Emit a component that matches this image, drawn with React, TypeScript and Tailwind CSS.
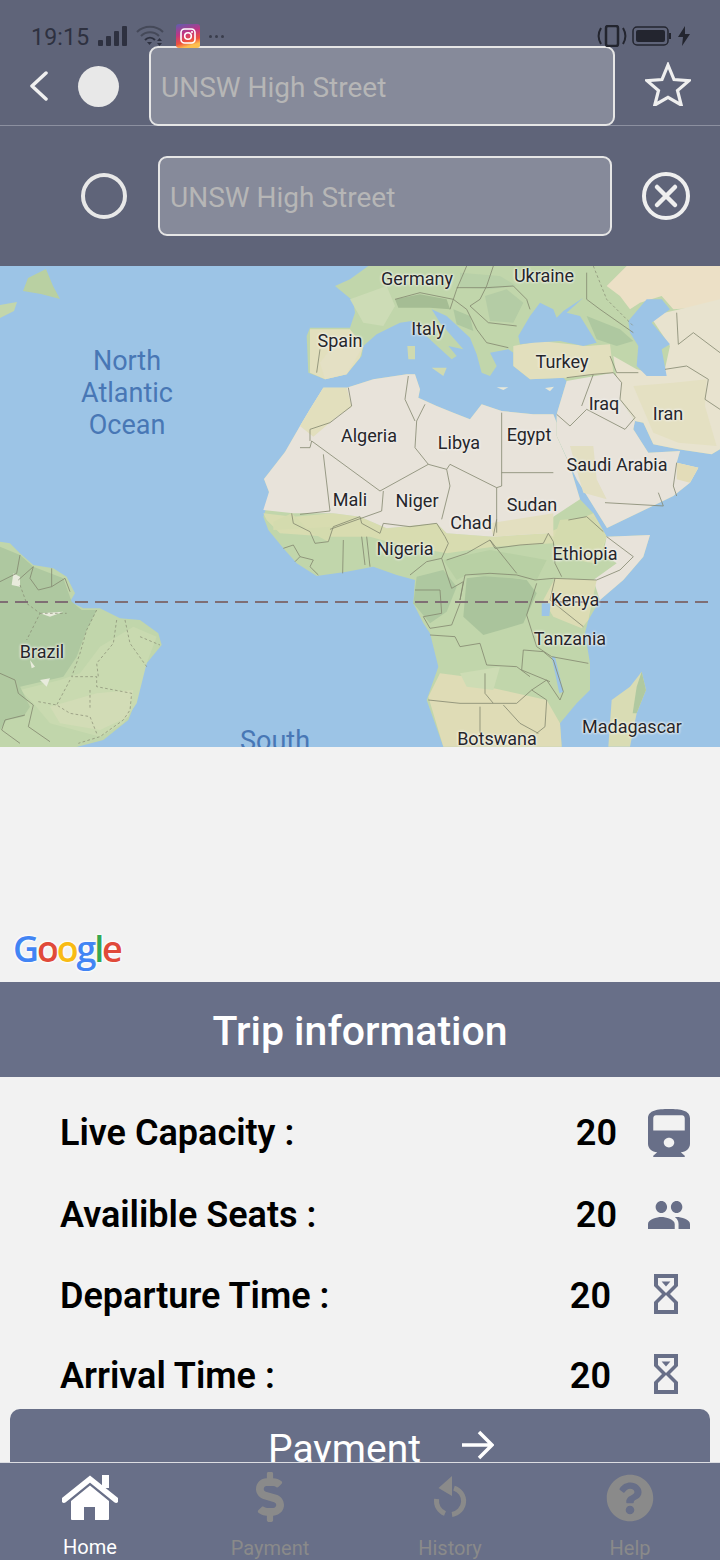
import { MdPeople } from "react-icons/md";
import { FaDollarSign, FaQuestionCircle } from "react-icons/fa";

const roboto = "font-['Roboto',sans-serif]";

// x, y = label centre in map pixels
const COUNTRIES = [
  { name: "Germany", x: 417, y: 13 },
  { name: "Ukraine", x: 544, y: 10 },
  { name: "Italy", x: 428, y: 63 },
  { name: "Spain", x: 340, y: 75 },
  { name: "Turkey", x: 562, y: 96 },
  { name: "Iraq", x: 604, y: 138 },
  { name: "Iran", x: 668, y: 148 },
  { name: "Algeria", x: 369, y: 170 },
  { name: "Libya", x: 459, y: 177 },
  { name: "Egypt", x: 529, y: 169 },
  { name: "Saudi Arabia", x: 617, y: 199 },
  { name: "Mali", x: 350, y: 234 },
  { name: "Niger", x: 417, y: 235 },
  { name: "Sudan", x: 532, y: 239 },
  { name: "Chad", x: 471, y: 257 },
  { name: "Nigeria", x: 405, y: 283 },
  { name: "Ethiopia", x: 585, y: 288 },
  { name: "Kenya", x: 575, y: 334 },
  { name: "Tanzania", x: 570, y: 373 },
  { name: "Brazil", x: 42, y: 386 },
  { name: "Madagascar", x: 632, y: 461 },
  { name: "Botswana", x: 497, y: 473 },
];

const ROWS = [
  { label: "Live Capacity :", value: "20", icon: "train", h: "h-[82px]" },
  { label: "Availible Seats :", value: "20", icon: "people", h: "h-[82px]" },
  { label: "Departure Time :", value: "20", icon: "hourglass", h: "h-[80px]" },
  { label: "Arrival Time :", value: "20", icon: "hourglass", h: "h-[80px]" },
];

function Hourglass() {
  return (
    <svg viewBox="6 2 12 20" className="w-6 h-10 -mt-1" fill="#686f88">
      <path d="M6 2v6h.01L6 8.01 10 12l-4 4 .01.01H6V22h12v-5.99h-.01L18 16l-4-4 4-3.99-.01-.01H18V2H6zm10 14.5V20H8v-3.5l4-4 4 4zm-4-5l-4-4V4h8v3.5l-4 4z" />
      <path d="M9.8 5.8h4.4L12 8.2z" />
    </svg>
  );
}

function StatusBar() {
  return (
    <div className="h-[46px] flex items-end pl-[31px] pr-[30px] text-[#2e3140] relative z-10">
      <span className={`${roboto} text-[23px] leading-[30px] translate-y-[7px] tracking-[0.2px]`}>19:15</span>
      <svg viewBox="0 0 30 20" className="w-[30px] h-5 ml-[9px]" fill="#2e3140">
        <rect x="0" y="14" width="5" height="6" rx="1" />
        <rect x="8" y="10" width="5" height="10" rx="1" />
        <rect x="16" y="5" width="5" height="15" rx="1" />
        <rect x="24" y="0" width="5" height="20" rx="1" />
      </svg>
      <svg viewBox="0 0 28 23" className="w-7 h-[23px] ml-2 translate-y-[1px]" fill="none" stroke="#454959" strokeWidth="2">
        <path d="M1 8C8 1 20 1 27 8" />
        <path d="M5 12c5-5 13-5 18 0" />
        <path d="M9 16c3-3 7-3 10 0" stroke="#2e3140" />
        <path d="M11 18h5l-2.500 3z" fill="#2e3140" stroke="none" />
        <path d="M21 17l2.500-3 2.500 3zM21 19l2.500 3 2.500-3z" fill="#2e3140" stroke="none" />
      </svg>
      <svg viewBox="0 0 24 24" className="w-6 h-6 ml-3 translate-y-[2px]">
        <defs>
          <linearGradient id="ig" x1="0" y1="0" x2="0.3" y2="1">
            <stop offset="0" stopColor="#5b5fb0" />
            <stop offset="0.45" stopColor="#c13584" />
            <stop offset="0.8" stopColor="#f0523c" />
            <stop offset="1" stopColor="#fdc04f" />
          </linearGradient>
        </defs>
        <rect width="24" height="24" rx="3" fill="url(#ig)" />
        <rect x="5" y="5" width="14" height="14" rx="3.500" fill="none" stroke="#fff" strokeWidth="1.600" />
        <circle cx="12" cy="12" r="3.300" fill="none" stroke="#fff" strokeWidth="1.600" />
        <circle cx="16" cy="8" r="1" fill="#fff" />
      </svg>
      <div className="flex gap-[3px] ml-[9px] mb-[8px]">
        <span className="w-[3px] h-[3px] rounded-full bg-[#3a3d4c]" />
        <span className="w-[3px] h-[3px] rounded-full bg-[#3a3d4c]" />
        <span className="w-[3px] h-[3px] rounded-full bg-[#3a3d4c]" />
      </div>
      <div className="ml-auto flex items-center translate-y-[1px]">
        <svg viewBox="0 0 30 22" className="w-[30px] h-[22px]" fill="none" stroke="#23252f" strokeWidth="2">
          <rect x="9" y="1" width="12" height="20" rx="2" strokeWidth="2.500" />
          <path d="M4 3C1 8 1 14 4 19M26 3c3 5 3 11 0 16" />
        </svg>
        <svg viewBox="0 0 40 20" className="w-10 h-5 ml-[5px]">
          <rect x="1" y="1" width="35" height="18" rx="4" fill="none" stroke="#23252f" strokeWidth="1.500" />
          <rect x="4" y="4" width="29" height="12" rx="2" fill="#23252f" />
          <rect x="37" y="7" width="2" height="6" fill="#23252f" />
        </svg>
        <svg viewBox="0 0 12 20" className="w-3 h-5 ml-[6px]" fill="#23252f">
          <path d="M7 0L0 11h5l-1 9 8-12H7z" />
        </svg>
      </div>
    </div>
  );
}

const WATER = "#9cc4e6";
const GREEN = "#c1d6ab";
const DARK = "#aec8a0";
const TAN = "#e2dfbd";
const SAND = "#e8e3da";
const LINE = "#83866f";

function MapArt() {
  return (
    <svg viewBox="0 0 720 481" className="absolute inset-0 w-full h-full blur-[0.5px]">
      <rect width="720" height="481" fill={WATER} />
      {/* north atlantic islands */}
      <path d="M23 25L28 12 46 3 53 20 60 33 41 28z" fill="#b9d0a2" />
      <path d="M0 39L17 36 14 45 0 52z" fill="#c3d6ab" />

      {/* eurasia, coords from a 3x crop at 300,0 */}
      <g transform="translate(300,0) scale(0.33333)">
        <path d="M205 0L150 40 105 60 160 105 165 140 150 185 30 185 20 210 25 320 75 340 140 325 185 270 190 240 230 205 300 170 335 165 395 225 455 280 470 270 445 240 490 250 420 170 395 130 440 150 510 215 530 265 545 320 570 330 590 300 570 260 625 250 640 260 640 300 690 340 790 335 800 345 770 445 770 510 830 640 921 786 1120 690 1170 650 1195 605 1130 590 1140 555 1045 560 1000 490 1005 465 1030 470 1060 535 1135 550 1235 565 1260 550 1260 0z" fill={GREEN} />
        {/* spain, turkey, steppe, middle east, arabia */}
        <path d="M30 190L150 190 190 240 180 275 140 325 75 340 30 320z" fill={TAN} />
        <path d="M120 210L190 240 140 325 75 340 60 290z" fill="#e4e0c4" />
        <path d="M640 240L720 225 860 240 930 235 940 320 800 335 690 340 640 300z" fill={TAN} />
        <path d="M920 60L980 0 1260 0 1260 130 1190 125 1120 130 1085 90 1020 110 990 130 960 90z" fill="#ece0c6" />
        <path d="M1050 150L1140 130 1260 100 1260 550 1235 565 1135 550 1060 535 1030 470 1005 465 960 400 940 270 1010 310 1090 330 1110 240z" fill="#e8e3cf" />
        <path d="M1000 360L1120 350 1220 340 1215 420 1250 540 1135 530 1060 500z" fill="#e4e0c2" />
        <path d="M800 345L940 320 965 350 960 400 1005 465 1000 490 1045 560 1140 555 1130 590 1195 605 1170 650 1120 690 921 786 830 640 770 510 770 445z" fill={SAND} />
        <path d="M810 540L880 540 890 640 920 700 850 680z" fill="#e3dfc2" />
        <path d="M1130 590L1195 605 1170 650 1130 640z" fill="#e3dcb8" />
        {/* mountains */}
        <path d="M285 100L360 85 440 100 450 130 390 125 330 125 295 125z" fill="#a5bd94" />
        <path d="M460 130L510 150 520 195 470 175z" fill={DARK} />
        <path d="M555 90L620 70 670 110 640 170 570 165z" fill="#b4cca5" />
        <path d="M480 20L600 30 650 60 570 70 480 65z" fill="#b8d0a8" />
        <path d="M860 150L960 190 1000 225 950 240 890 220z" fill="#aec8a0" />
        <path d="M150 100L260 60 285 120 250 180 190 170z" fill="#cddcb6" />
        {/* seas */}
        <path d="M655 210L690 150 720 110 760 130 770 155 790 135 850 95 800 140 840 150 890 230 850 240 780 225 700 230 660 235z" fill={WATER} />
        <path d="M985 165L1040 100 1085 100 1110 130 1055 170 1110 235 1085 250 1100 330 1040 330 1010 300 1015 240 990 200z" fill={WATER} />
        {/* mediterranean islands */}
        <path d="M322 240L345 240 345 280 325 280z" fill="#cfdab0" />
        <path d="M395 305L440 305 430 330z" fill="#d0dab0" />
        <path d="M590 364L625 364 610 372z" fill="#e8e8d8" />
        <path d="M735 366L762 362 750 376z" fill="#e8e8d8" />
        {/* borders */}
        <g fill="none" stroke={LINE} strokeWidth="2.400">
          <path d="M285 100L360 80 460 100 500 130 530 190 560 230 625 245M470 65L560 65 640 60 680 100 690 130M500 0L470 70 450 130M560 60L540 100 510 120 565 170 650 180M60 250L50 320M580 0L560 60M860 20L860 100 900 130 1000 200" />
          <path d="M800 335L880 325 940 320 965 350 960 400 1005 455 975 490 860 430 810 480 770 445M880 325L845 420M930 270L950 320 1015 320M1095 310L1160 300 1225 340 1215 400 1260 430M1130 140L1135 235 1180 200 1260 260M1130 690L1120 660 1130 590M1075 680L1090 720 915 710" />
        </g>
        <path d="M880 0L920 100 1000 180" fill="none" stroke={LINE} strokeWidth="2" strokeDasharray="8 7" />
      </g>

      {/* africa, coords from a 3x crop at 260,234 */}
      <g transform="translate(260,234) scale(0.33333)">
        <path d="M120 -222L150 -272 190 -337 260 -337 340 -362 440 -377 465 -377 480 -332 475 -307 530 -282 580 -262 630 -242 665 -287 725 -267 820 -257 880 -257 890 -232 890 -192 930 -102 960 -2 1000 40 1040 110 1170 105 1150 170 1090 240 1020 300 985 360 975 400 990 490 990 570 950 610 900 670 905 740 550 740 500 600 535 500 510 400 490 370 460 310 465 240 410 225 340 200 260 215 170 228 110 190 70 145 25 90 10 50 20 20 27 -24 12 -63 75 -144z" fill={GREEN} />
        <path d="M10 40L100 50 220 40 300 50 380 85 530 70 560 100 700 110 860 100 1000 40 1040 110 1020 170 880 130 700 140 560 160 400 130 330 110 210 110 60 100 20 60z" fill="#d8dcb0" />
        <path d="M900 60L1000 50 1040 110 1000 190 900 170 880 120z" fill="#d4dbae" />
        <path d="M120 -222L150 -272 190 -337 260 -337 340 -362 440 -377 465 -377 480 -332 475 -307 530 -282 580 -262 630 -242 665 -287 725 -267 820 -257 880 -257 890 -232 890 -192 930 -102 960 -2 880 50 860 100 700 110 560 100 530 70 380 85 300 50 220 40 100 40 10 30 27 -24 12 -63 75 -144z" fill={SAND} />
        <path d="M120 -222L150 -272 190 -337 260 -337 275 -280 230 -250 160 -190z" fill="#e2dfbd" />
        <path d="M690 70L880 40 880 110 860 100 700 110z" fill="#e3dfc0" />
        <path d="M1040 110L1170 105 1150 170 1090 240 1020 300 1000 240 1070 190 1030 160z" fill={SAND} />
        <path d="M885 235L1010 240 985 360 965 385 880 350 850 300z" fill="#dcdcb4" />
        <path d="M470 230L550 210 590 260 560 335 510 370 460 310z" fill={DARK} />
        <path d="M620 235L700 225 800 240 830 280 790 370 670 405 610 350z" fill="#aac49c" />
        <path d="M550 180L690 150 860 180 830 240 620 225 590 240z" fill="#b8d0a4" />
        <path d="M505 590L540 520 620 530 680 560 860 600 900 670 905 740 550 740z" fill="#dfdcb6" />
        <path d="M600 520L720 500 700 570 620 560z" fill="#cddcb4" />
        <path d="M875 470L885 470 910 575 898 580z" fill={WATER} />
        <path d="M845 310L872 310 868 348 845 348z" fill={WATER} />
        <path d="M40 65L95 40 150 95 205 125 220 80 40 90z" fill="#d4dbae" />
        <g fill="none" stroke={LINE} strokeWidth="2.400">
          <path d="M95 40L100 70 150 95 165 130 205 125 220 80 300 50 305 70 360 100 370 70 450 80 530 70 555 110 565 130 545 175M250 120L248 220M320 110L330 200M305 110L315 195M70 145L100 135 120 170 105 185M120 170L160 180 150 200 175 225" />
          <path d="M545 175L500 185 450 225M545 175L575 265 610 245 600 300 615 225 690 220 770 225 825 240 880 235 1010 240M560 180L620 160 690 120 770 220M690 120L705 145 780 135 850 130 865 100 880 125 885 190 905 230M830 250L800 345 830 440 875 470 985 490M885 235L870 300 970 380" />
          <path d="M510 405L585 410 600 440 660 430 680 495 770 500 810 530M790 450L785 510 870 545M790 450L850 455 880 480 910 575 900 600 860 540 815 570 860 600 855 680 830 700M505 600L600 610 700 610 770 610 815 570M675 520L675 580 700 610M660 620L660 700M730 615L780 670 835 700M465 270L540 270 545 340 490 350 510 385 575 375 600 310M1040 110L1120 170 1080 210 1010 240M925 60L980 50 1030 95" />
          {/* sahara, shifted from the upper crop */}
          <path transform="translate(120,-702)" d="M0 545L30 545 35 525 240 675 385 595 345 545 350 465 375 415M345 465L315 400 325 330M385 595L440 610 450 595 590 665 605 660 605 440M605 620L760 620M590 665L590 800M440 610L450 660 425 760M70 565L90 735 0 745M250 675L245 735 90 790M30 525L30 490 90 470 155 420 145 365M590 760L580 810" />
        </g>
        {/* madagascar */}
        <path d="M1145 515L1158 570 1130 640 1110 740 1045 740 1055 600 1110 560z" fill="#d9dcb4" />
        <path d="M1145 515L1158 570 1130 640 1118 640 1130 560z" fill="#b0c9a0" />
      </g>

      {/* south america, coords from a 3x crop at 0,264 */}
      <g transform="translate(0,264) scale(0.33333)">
        <path d="M0 35L30 40 60 70 100 105 160 115 200 140 225 190 210 215 250 235 300 235 360 265 420 270 475 310 485 345 440 400 415 450 405 520 385 570 310 630 230 651 0 651z" fill={GREEN} />
        <path d="M0 50L60 75 100 110 190 145 215 215 245 240 290 240 260 300 230 380 190 440 60 470 0 430z" fill="#aec8a0" />
        <path d="M240 430L300 350 400 290 470 320 440 400 410 520 370 580 300 620 150 580 100 520 60 480 180 450z" fill="#c9dab0" />
        <path d="M150 530L290 490 400 480 385 560 300 600 180 580z" fill="#d2dcb6" />
        <path d="M0 430L50 450 90 530 70 560 20 570 0 600z" fill="#b0c9a0" />
        <path d="M40 130L60 140 60 170 35 165zM120 450L150 445 140 470zM190 245L150 260 120 250zM90 390L105 410 95 415z" fill="#e8ebdc" />
        <g fill="none" stroke={LINE} strokeWidth="2.400">
          <path d="M0 155L50 130 60 75M55 150L100 110 90 145 115 180 155 170 155 115M155 170L195 145 210 185M0 430L45 450 55 490 100 525 85 590 150 635M15 570L75 555M15 570L5 600 60 640" />
        </g>
        <g fill="none" stroke={LINE} strokeWidth="2" strokeDasharray="8 7">
          <path d="M60 165L80 220 120 250 80 330M120 250L200 250M290 240L260 300 240 370 215 440 290 440 290 470 395 490 390 540 370 570 300 620 235 640M350 270L340 340 290 400 295 440M375 270L390 340 440 410M420 320L480 345M115 515L170 525 210 550 270 560 290 610M270 480L270 540M210 450L170 525" />
        </g>
      </g>

      {/* equator */}
      <path d="M0 336H720" fill="none" stroke="#7f6e74" strokeWidth="1.800" strokeDasharray="13 7" transform="translate(-5,0)" />
    </svg>
  );
}

export default function App() {
  return (
    <div className={`${roboto} w-[720px] h-[1560px] overflow-hidden flex flex-col bg-[#f2f2f2]`}>
      {/* header */}
      <header className="bg-[#5f6479] h-[266px] shrink-0">
        <StatusBar />
        <div className="h-[80px] border-b border-[#8c90a0] flex items-start">
          <svg viewBox="0 0 18 30" className="w-[18px] h-[30px] ml-[30px] mt-[25px]" fill="none" stroke="#f0f0f0" strokeWidth="3.500" strokeLinecap="round" strokeLinejoin="round">
            <path d="M16 2L2 15l14 13" />
          </svg>
          <span className="w-[41px] h-[41px] rounded-full bg-[#e8e8e8] ml-[30px] mt-5" />
          <div className="w-[466px] h-[80px] ml-[30px] rounded-[9px] border-2 border-[#e6e6e6] bg-[#868a9a] flex items-center pl-[10px] pt-[3px] text-[28px] text-[#b6b6b6]">
            UNSW High Street
          </div>
          <svg viewBox="0 0 46 44" className="w-[46px] h-[44px] ml-[30px] mt-[16px]" fill="none" stroke="#efefef" strokeWidth="3.200" strokeLinejoin="miter">
            <path d="M23 3l6 14.500 15 1.200-11.500 9.800 3.700 14.500L23 35.300 9.800 43l3.700-14.500L2 18.700l15-1.200z" />
          </svg>
        </div>
        <div className="flex items-start pt-[30px]">
          <span className="w-[46px] h-[46px] rounded-full border-[4px] border-[#e8e8e8] ml-[81px] mt-[17px]" />
          <div className="w-[454px] h-[80px] ml-[31px] rounded-[9px] border-2 border-[#e6e6e6] bg-[#868a9a] flex items-center pl-[10px] pt-[3px] text-[28px] text-[#b6b6b6]">
            UNSW High Street
          </div>
          <svg viewBox="0 0 48 48" className="w-12 h-12 ml-[30px] mt-4" fill="none" stroke="#efefef" strokeWidth="4">
            <circle cx="24" cy="24" r="22" />
            <path d="M15 15l18 18M33 15L15 33" strokeLinecap="round" strokeWidth="4.500" />
          </svg>
        </div>
      </header>

      {/* map */}
      <div className="relative h-[481px] shrink-0 overflow-hidden bg-[#9cc4e6]">
        <MapArt />
        <div className="absolute left-[127px] top-[79px] -translate-x-1/2 text-center text-[27px] leading-[32px] text-[#4877b5]">
          North<br />Atlantic<br />Ocean
        </div>
        <span className="absolute left-[275px] top-[459px] -translate-x-1/2 text-[27px] leading-[32px] text-[#4877b5]">South</span>
        {COUNTRIES.map((c) => (
          <span
            key={c.name}
            className="absolute -translate-x-1/2 -translate-y-1/2 whitespace-nowrap text-[18px] leading-[20px] text-[#26262a] [text-shadow:0_0_3px_#f2f2ee,0_0_3px_#f2f2ee,0_0_2px_#f2f2ee]"
            style={{ left: c.x, top: c.y }}
          >
            {c.name}
          </span>
        ))}
      </div>

      {/* unpainted map tiles */}
      <div className="h-[235px] shrink-0 flex items-end pl-[13px] pb-[10px]">
        <div className="font-['Open_Sans',sans-serif] font-semibold text-[36px] leading-[46px] tracking-[-2.2px] [text-shadow:0_0_3px_#fff,0_0_3px_#fff,0_0_3px_#fff]">
          <span className="text-[#4285f4]">G</span>
          <span className="text-[#e04a3a]">o</span>
          <span className="text-[#f8bb15]">o</span>
          <span className="text-[#4285f4]">g</span>
          <span className="text-[#34a853]">l</span>
          <span className="text-[#e04a3a]">e</span>
        </div>
      </div>

      <div className="h-[95px] shrink-0 bg-[#686f88] flex items-center justify-center pt-[5px] text-white text-[41px] font-medium">
        Trip information
      </div>

      {/* trip rows */}
      <div className="flex-1 min-h-0 overflow-hidden flex flex-col pt-[15px]">
        {ROWS.map((r) => (
          <div key={r.label} className={`flex items-center pl-[60px] shrink-0 text-black text-[36px] font-semibold ${r.h}`}>
            <span className="flex-1">{r.label}</span>
            <span>{r.value}</span>
            {r.icon === "hourglass" ? (
              <span className="w-[24px] ml-[43px] mr-[42px] flex justify-center"><Hourglass /></span>
            ) : (
              <span className="w-[42px] ml-[31px] mr-[30px] flex justify-center">
                {r.icon === "train" ? (
                  <svg viewBox="4 1 16 20" preserveAspectRatio="none" className="w-[42px] h-[48px]" fill="#686f88">
                    <path d="M4 15.500C4 17.430 5.570 19 7.500 19L6 20.500v.500h12v-.500L16.500 19c1.930 0 3.500-1.570 3.500-3.500V5c0-3.500-3.580-4-8-4s-8 .500-8 4v10.500zm8 1.500c-1.100 0-2-.900-2-2s.900-2 2-2 2 .900 2 2-.900 2-2 2zm6-7H6V5c0-1 .5-1.400 1-1.400h10c.5 0 1 .4 1 1.400v5z" />
                  </svg>
                ) : (
                  <MdPeople className="w-[42px] h-[28px] text-[#686f88]" viewBox="1 5 22 14" preserveAspectRatio="none" />
                )}
              </span>
            )}
          </div>
        ))}
        <div className="mx-[10px] mt-[-7px] h-[90px] shrink-0 rounded-[10px] bg-[#686f88] flex items-start justify-center pt-[17px] pl-[42px] text-white text-[39px] leading-[46px]">
          <span>Payment</span>
          <svg viewBox="0 0 32 30" className="w-8 h-[30px] ml-[41px] mt-[4px]" fill="none" stroke="#fff" strokeWidth="3.500">
            <path d="M0 15h30M17 2l13 13-13 13" />
          </svg>
        </div>
      </div>

      {/* bottom tabs */}
      <nav className="h-[98px] shrink-0 relative z-10 bg-[#686f88] border-t border-[#dcdde2] grid grid-cols-4 text-[20px] leading-[26px] text-[#8a8a8a]">
        <div className="flex flex-col items-center text-white pt-[12px]">
          <svg viewBox="0 0 56 45" className="w-[56px] h-[45px]" fill="#fff">
            <path d="M40 0h7v13h-7z" />
            <path d="M2 25L28 4l26 21" fill="none" stroke="#fff" strokeWidth="5.500" strokeLinecap="round" strokeLinejoin="miter" />
            <path d="M9 26L28 10.500 47 26v18a1 1 0 0 1-1 1H33V32H22v13H10a1 1 0 0 1-1-1z" />
          </svg>
          <span className="mt-[14px]">Home</span>
        </div>
        <div className="flex flex-col items-center pt-[9px]">
          <FaDollarSign className="w-[28px] h-[50px]" />
          <span className="mt-[13px]">Payment</span>
        </div>
        <div className="flex flex-col items-center pt-[12px]">
          <svg viewBox="0 0 36 42" className="w-9 h-[42px]" fill="none" stroke="#8a8a8a" strokeWidth="5">
            <path d="M22 13.100A13.500 13.500 0 0 1 20 39.400" />
            <path d="M4.600 24A13.500 13.500 0 0 0 13 38.500" />
            <path d="M20 1v20L6.500 13z" fill="#8a8a8a" stroke="none" />
          </svg>
          <span className="mt-[18px]">History</span>
        </div>
        <div className="flex flex-col items-center pt-[11px]">
          <FaQuestionCircle className="w-[48px] h-[48px]" />
          <span className="mt-[13px]">Help</span>
        </div>
      </nav>
    </div>
  );
}
